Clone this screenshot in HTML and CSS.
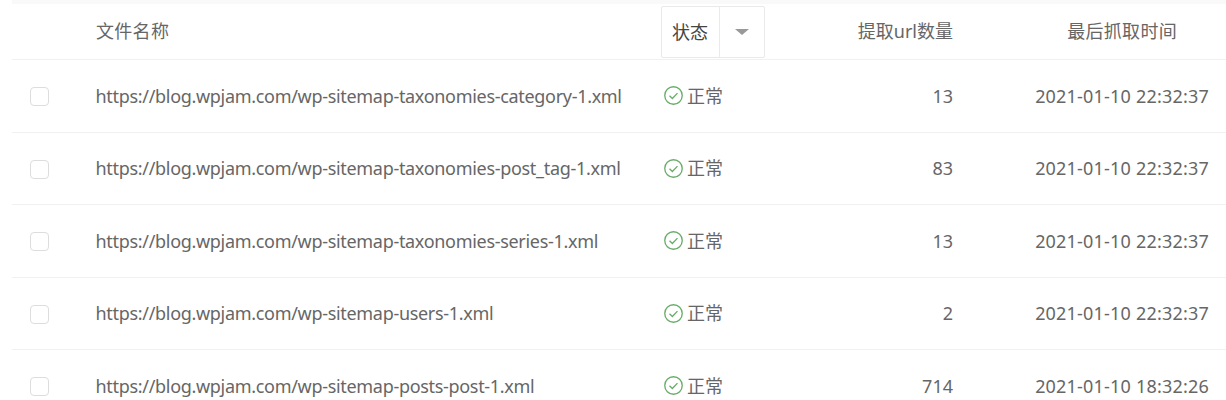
FILE: index.html
```html
<!DOCTYPE html>
<html lang="zh">
<head>
<meta charset="utf-8">
<title>Sitemap</title>
<link rel="stylesheet" href="styles.css">
</head>
<body>
<div class="topband"></div>
<div class="list">
  <div class="row head">
    <div class="c-check"></div>
    <div class="c-name">文件名称</div>
    <div class="c-status">
      <div class="filter"><span class="filter-label">状态</span><span class="filter-btn"><i class="caret"></i></span></div>
    </div>
    <div class="c-count">提取url数量</div>
    <div class="c-time c-time-head">最后抓取时间</div>
  </div>
  <div class="row">
    <div class="c-check"><span class="box"></span></div>
    <div class="c-name">https://blog.wpjam.com/wp-sitemap-taxonomies-category-1.xml</div>
    <div class="c-status"><svg class="ok" viewBox="0 0 20 20"><circle cx="10" cy="10" r="9.2"/><path d="M5.8 10.2l3 2.9 5.4-5.6"/></svg><span class="state">正常</span></div>
    <div class="c-count">13</div>
    <div class="c-time">2021-01-10 22:32:37</div>
  </div>
  <div class="row">
    <div class="c-check"><span class="box"></span></div>
    <div class="c-name">https://blog.wpjam.com/wp-sitemap-taxonomies-post_tag-1.xml</div>
    <div class="c-status"><svg class="ok" viewBox="0 0 20 20"><circle cx="10" cy="10" r="9.2"/><path d="M5.8 10.2l3 2.9 5.4-5.6"/></svg><span class="state">正常</span></div>
    <div class="c-count">83</div>
    <div class="c-time">2021-01-10 22:32:37</div>
  </div>
  <div class="row">
    <div class="c-check"><span class="box"></span></div>
    <div class="c-name">https://blog.wpjam.com/wp-sitemap-taxonomies-series-1.xml</div>
    <div class="c-status"><svg class="ok" viewBox="0 0 20 20"><circle cx="10" cy="10" r="9.2"/><path d="M5.8 10.2l3 2.9 5.4-5.6"/></svg><span class="state">正常</span></div>
    <div class="c-count">13</div>
    <div class="c-time">2021-01-10 22:32:37</div>
  </div>
  <div class="row">
    <div class="c-check"><span class="box"></span></div>
    <div class="c-name">https://blog.wpjam.com/wp-sitemap-users-1.xml</div>
    <div class="c-status"><svg class="ok" viewBox="0 0 20 20"><circle cx="10" cy="10" r="9.2"/><path d="M5.8 10.2l3 2.9 5.4-5.6"/></svg><span class="state">正常</span></div>
    <div class="c-count">2</div>
    <div class="c-time">2021-01-10 22:32:37</div>
  </div>
  <div class="row">
    <div class="c-check"><span class="box"></span></div>
    <div class="c-name">https://blog.wpjam.com/wp-sitemap-posts-post-1.xml</div>
    <div class="c-status"><svg class="ok" viewBox="0 0 20 20"><circle cx="10" cy="10" r="9.2"/><path d="M5.8 10.2l3 2.9 5.4-5.6"/></svg><span class="state">正常</span></div>
    <div class="c-count">714</div>
    <div class="c-time">2021-01-10 18:32:26</div>
  </div>
</div>
</body>
</html>
```
FILE: styles.css
```css
html, body { margin: 0; padding: 0; background: #fff; overflow: hidden; height: 400px; }
body {
  font-family: "Noto Sans", "Noto Sans CJK SC", sans-serif;
  font-size: 18px;
  color: #666;
}
.topband { height: 4px; background: #f9f9f9; margin-left: 12px; }
.list { margin-left: 12px; }
.row {
  display: grid;
  grid-template-columns: 84px 566px 168px 124px 1fr;
  align-items: center;
  height: 72.5px;
  border-bottom: 1px solid #f1f1f1;
  box-sizing: border-box;
}
.row.head { height: 56px; }
.c-check { display: flex; padding-left: 18px; padding-top: 2px; }
.box {
  width: 19px; height: 19px;
  border: 1.5px solid #ddd;
  border-radius: 4px;
  box-sizing: border-box;
  background: #fff;
}
.c-name { white-space: nowrap; letter-spacing: -0.31px; margin-left: -0.5px; }
.head .c-name { letter-spacing: 0.3px; padding-bottom: 4px; margin-left: 0; }
.c-status { display: flex; align-items: center; padding-left: 2px; }
.state { padding-bottom: 2px; }
.ok { width: 19px; height: 19px; margin-right: 4px; fill: none; stroke: #68ad68; stroke-width: 1.4; }
.head .c-status { padding-left: 0; align-self: start; padding-top: 2px; margin-left: -1px; }
.filter {
  display: flex; width: 104px; height: 52px;
  border: 1px solid #eaeaea; border-radius: 2px; box-sizing: border-box;
  color: #444;
}
.filter-label { width: 58px; border-right: 1px solid #eaeaea; display: flex; align-items: center; padding-left: 10px; padding-bottom: 2px; box-sizing: border-box; }
.filter-btn { flex: 1; display: flex; align-items: center; justify-content: center; }
.caret { width: 0; height: 0; border: 7px solid transparent; border-top: 6px solid #999; border-bottom: 0; }
.c-count { text-align: right; margin-right: 1px; }
.head .c-count, .head .c-time { padding-bottom: 4px; }
.c-time { text-align: right; padding-right: 17px; white-space: nowrap; letter-spacing: 0.2px; }
.c-time-head { padding-right: 49px; letter-spacing: 0.3px; }
```
